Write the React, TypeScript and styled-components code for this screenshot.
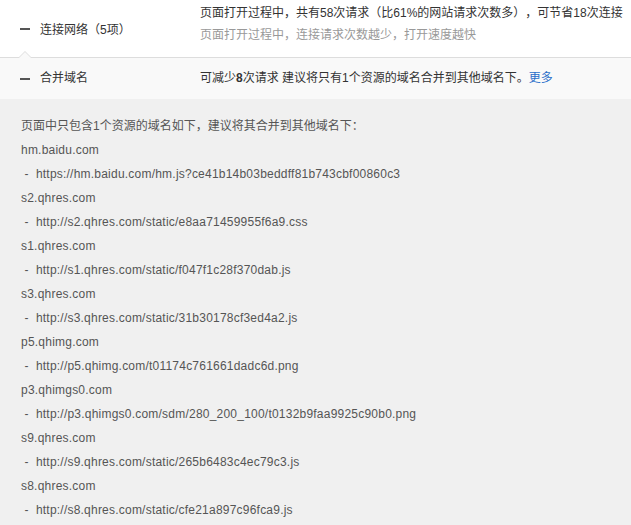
import React from "react";
import styled, { createGlobalStyle } from "styled-components";

const Global = createGlobalStyle`
  html, body { margin: 0; padding: 0; background: #ffffff; }
  body {
    font-family: "Liberation Sans", Arial, "Noto Sans CJK SC", sans-serif;
    font-size: 12px;
    color: #333;
    overflow: hidden;
    text-spacing-trim: space-all;
  }
`;

const Page = styled.div`
  width: 631px;
  height: 525px;
  overflow: hidden;
`;

const Head = styled.div`
  display: flex;
  height: 57px;
  border-bottom: 1px solid #dddddd;
  background: #ffffff;
  position: relative;
`;

const Label = styled.div<{ $width?: number }>`
  display: flex;
  align-items: center;
  width: ${(p) => p.$width ?? 200}px;
  flex-shrink: 0;
  padding-left: 20px;
  box-sizing: border-box;
  color: #333;
  white-space: nowrap;
`;

const Minus = styled.span`
  display: inline-block;
  width: 10px;
  height: 2px;
  background: #555;
  margin-right: 10px;
`;

const Summary = styled.div`
  padding-top: 2px;
  line-height: 22px;
  white-space: nowrap;
`;

const Line = styled.div<{ $muted?: boolean }>`
  color: ${(p) => (p.$muted ? "#999" : "#333")};
`;

const Arrow = styled.span`
  position: absolute;
  left: 18px;
  bottom: -1px;
  width: 0;
  height: 0;
  border-left: 7px solid transparent;
  border-right: 7px solid transparent;
  border-bottom: 7px solid #dddddd;
  &::after {
    content: "";
    position: absolute;
    left: -6px;
    top: 1px;
    border-left: 6px solid transparent;
    border-right: 6px solid transparent;
    border-bottom: 6px solid #f9f9f9;
  }
`;

const SubRow = styled.div`
  display: flex;
  height: 41px;
  line-height: 41px;
  background: #f9f9f9;
`;

const Advice = styled.div`
  white-space: nowrap;
  color: #333;
`;

const Bold = styled.b`
  font-weight: bold;
`;

const More = styled.a`
  color: #2a6fc9;
  text-decoration: none;
`;

const Detail = styled.div`
  background: #f0f0f0;
  padding: 15px 0 0 21px;
  height: 100%;
  color: #555;
`;

const DetailLine = styled.div<{ $latin?: boolean }>`
  line-height: 24px;
  white-space: nowrap;
  letter-spacing: ${(p) => (p.$latin ? "0.22px" : "0")};
`;

const groups: [string, string][] = [
  ["hm.baidu.com", "https://hm.baidu.com/hm.js?ce41b14b03beddff81b743cbf00860c3"],
  ["s2.qhres.com", "http://s2.qhres.com/static/e8aa71459955f6a9.css"],
  ["s1.qhres.com", "http://s1.qhres.com/static/f047f1c28f370dab.js"],
  ["s3.qhres.com", "http://s3.qhres.com/static/31b30178cf3ed4a2.js"],
  ["p5.qhimg.com", "http://p5.qhimg.com/t01174c761661dadc6d.png"],
  ["p3.qhimgs0.com", "http://p3.qhimgs0.com/sdm/280_200_100/t0132b9faa9925c90b0.png"],
  ["s9.qhres.com", "http://s9.qhres.com/static/265b6483c4ec79c3.js"],
  ["s8.qhres.com", "http://s8.qhres.com/static/cfe21a897c96fca9.js"],
];

export default function App() {
  return (
    <Page>
      <Global />
      <Head>
        <Label>
          <Minus />
          连接网络（5项）
        </Label>
        <Summary>
          <Line>页面打开过程中，共有58次请求（比61%的网站请求次数多），可节省18次连接</Line>
          <Line $muted>页面打开过程中，连接请求次数越少，打开速度越快</Line>
        </Summary>
        <Arrow />
      </Head>
      <SubRow>
        <Label>
          <Minus />
          合并域名
        </Label>
        <Advice>
          可减少<Bold>8</Bold>次请求 建议将只有1个资源的域名合并到其他域名下。<More href="#">更多</More>
        </Advice>
      </SubRow>
      <Detail>
        <DetailLine>页面中只包含1个资源的域名如下，建议将其合并到其他域名下：</DetailLine>
        {groups.map(([domain, url]) => (
          <React.Fragment key={domain}>
            <DetailLine $latin>{domain}</DetailLine>
            <DetailLine $latin>&nbsp;-&nbsp; {url}</DetailLine>
          </React.Fragment>
        ))}
      </Detail>
    </Page>
  );
}
